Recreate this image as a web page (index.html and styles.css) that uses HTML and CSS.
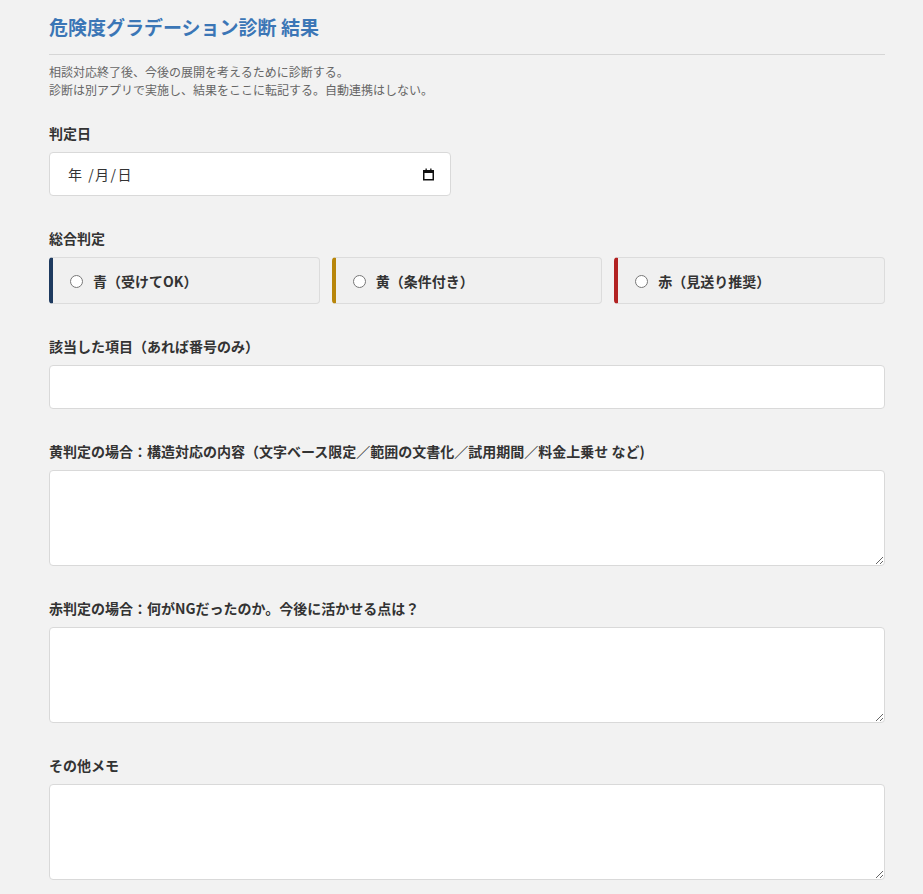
FILE: index.html
```html
<!DOCTYPE html>
<html lang="ja">
<head>
<meta charset="utf-8">
<link rel="stylesheet" href="styles.css">
</head>
<body>
<div class="page">
  <h2 class="title">危険度グラデーション診断 結果</h2>
  <p class="desc">相談対応終了後、今後の展開を考えるために診断する。<br>診断は別アプリで実施し、結果をここに転記する。自動連携はしない。</p>

  <div class="field">
    <label class="label">判定日</label>
    <div class="date">
      <span class="date-text">年 /月/日</span>
      <svg class="cal" width="13" height="13" viewBox="0 0 13 13" aria-hidden="true">
        <rect x="1.75" y="2.75" width="9.5" height="9" fill="none" stroke="#111" stroke-width="1.5"/>
        <rect x="1" y="2" width="11" height="3" fill="#111"/>
        <rect x="3.5" y="0.5" width="1.3" height="2" fill="#111"/>
        <rect x="8.2" y="0.5" width="1.3" height="2" fill="#111"/>
      </svg>
    </div>
  </div>

  <div class="field">
    <label class="label">総合判定</label>
    <div class="radios">
      <label class="card card-blue"><input type="radio" name="j"><span>青（受けてOK）</span></label>
      <label class="card card-yellow"><input type="radio" name="j"><span>黄（条件付き）</span></label>
      <label class="card card-red"><input type="radio" name="j"><span>赤（見送り推奨）</span></label>
    </div>
  </div>

  <div class="field">
    <label class="label">該当した項目（あれば番号のみ）</label>
    <input class="text" type="text">
  </div>

  <div class="field">
    <label class="label">黄判定の場合：構造対応の内容（文字ベース限定／範囲の文書化／試用期間／料金上乗せ など)</label>
    <textarea class="area"></textarea>
  </div>

  <div class="field">
    <label class="label">赤判定の場合：何がNGだったのか。今後に活かせる点は？</label>
    <textarea class="area"></textarea>
  </div>

  <div class="field">
    <label class="label">その他メモ</label>
    <textarea class="area"></textarea>
  </div>
</div>
</body>
</html>
```
FILE: styles.css
```css
html, body {
  margin: 0;
  padding: 0;
  background: #f2f2f2;
  font-family: "Noto Sans CJK JP", "Noto Sans", sans-serif;
  color: #333;
}
.page {
  padding: 13px 38px 20px 49px;
}
.title {
  margin: 0;
  font-size: 19px;
  line-height: 28px;
  font-weight: 700;
  color: #3b76b6;
  padding-bottom: 13px;
  border-bottom: 1px solid #d6d6d6;
}
.desc {
  margin: 8px 0 0;
  font-size: 12px;
  line-height: 18px;
  color: #666;
}
.field {
  margin-top: 25px;
  display: flex;
  flex-direction: column;
}
.field + .field {
  margin-top: 33px;
}
.label {
  display: block;
  font-size: 14px;
  line-height: 18px;
  font-weight: 700;
  color: #333;
  margin-bottom: 10px;
}
.date, .text, .area {
  box-sizing: border-box;
  background: #fff;
  border: 1px solid #d9d9d9;
  border-radius: 4px;
  font-family: inherit;
  font-size: 14px;
  color: #333;
  margin: 0;
}
.date {
  width: 402px;
  height: 44px;
  padding: 0 15px 0 18px;
  display: flex;
  align-items: center;
  justify-content: space-between;
}
.date-text {
  font-size: 14px;
  letter-spacing: 1.5px;
  color: #333;
}
.cal {
  display: block;
}
.text {
  width: 100%;
  height: 44px;
  padding: 0 12px;
}
.area {
  display: block;
  width: 100%;
  height: 96px;
  padding: 10px 12px;
  resize: vertical;
}
.radios {
  display: grid;
  grid-template-columns: 1fr 1fr 1fr;
  gap: 12px;
}
.card {
  box-sizing: border-box;
  height: 47px;
  display: flex;
  align-items: center;
  gap: 10px;
  padding: 0 0 0 17px;
  background: #f0f0f0;
  border: 1px solid #dcdcdc;
  border-left: 4px solid #1e3a5f;
  border-radius: 4px;
  font-size: 14px;
  font-weight: 700;
  color: #333;
}
.card input {
  margin: 2px 0 0;
  width: 13px;
  height: 13px;
}
.card-blue { border-left-color: #1e3a5f; }
.card-yellow { border-left-color: #b8860b; }
.card-red { border-left-color: #b22222; }
```
